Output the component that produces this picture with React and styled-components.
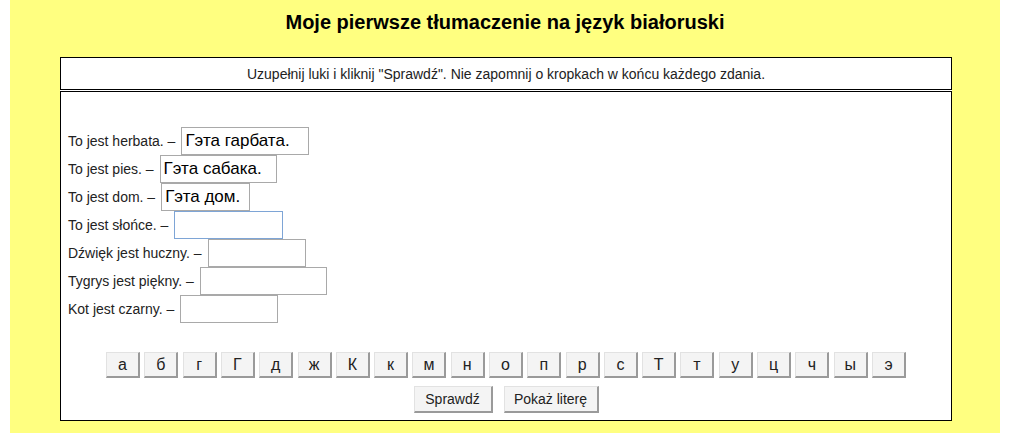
import React from "react";
import styled, { createGlobalStyle } from "styled-components";

const Global = createGlobalStyle`
  html, body { margin: 0; padding: 0; background: #ffffff; }
  body { font-family: Arial, "Liberation Sans", sans-serif; }
`;

const Page = styled.div`
  width: 990px;
  margin-left: 10px;
  min-height: 433px;
  background: #ffff80;
  padding-top: 11px;
  box-sizing: border-box;
`;

const Title = styled.h1`
  margin: 0;
  text-align: center;
  font-size: 20px;
  font-weight: bold;
  color: #000;
  line-height: 22px;
`;

const Frame = styled.div`
  width: 892px;
  margin: 24px 0 0 50px;
  background: #fff;
  display: flex;
  flex-direction: column;
  gap: 1px;
`;

const Instruction = styled.div`
  border: 1px solid #000;
  height: 31px;
  display: flex;
  align-items: center;
  justify-content: center;
  font-size: 14px;
  color: #222;
`;

const Content = styled.div`
  border: 1px solid #000;
  padding: 35px 7px 0;
  box-sizing: border-box;
  height: 330px;
  display: flex;
  flex-direction: column;
`;

const Rows = styled.div`
  display: flex;
  flex-direction: column;
`;

const Row = styled.div`
  display: flex;
  align-items: center;
  height: 28px;
  gap: 6px;
  font-size: 14px;
  color: #222;
`;

const Field = styled.input`
  box-sizing: border-box;
  width: ${(p) => p.$w}px;
  height: 28px;
  padding: 2px 3px;
  border: 1px solid ${(p) => (p.$focus ? "#7ea5d6" : "#a9a9a9")};
  font-family: Arial, "Liberation Sans", sans-serif;
  font-size: 17px;
  color: #000;
  background: #fff;
  outline: none;
`;

const Letters = styled.div`
  display: flex;
  justify-content: center;
  gap: 4.3px;
  margin-top: 29px;
`;

const Btn = styled.button`
  box-sizing: border-box;
  height: 26px;
  padding: 0;
  font-family: Arial, "Liberation Sans", sans-serif;
  color: #222;
  background: #f4f4f4;
  border-style: solid;
  border-width: 1px 2px 2px 1px;
  border-color: #e2e2e2 #9a9a9a #9a9a9a #e2e2e2;
  cursor: pointer;
`;

const LetterBtn = styled(Btn)`
  width: 34px;
  font-size: 16px;
`;

const ActionBtn = styled(Btn)`
  width: ${(p) => p.$w}px;
  height: 27px;
  font-size: 14px;
`;

const Actions = styled.div`
  display: flex;
  justify-content: center;
  gap: 11px;
  margin-top: 8px;
`;

const rows = [
  { label: "To jest herbata. –", value: "Гэта гарбата.", w: 128 },
  { label: "To jest pies. –", value: "Гэта сабака.", w: 117 },
  { label: "To jest dom. –", value: "Гэта дом.", w: 89 },
  { label: "To jest słońce. –", value: "", w: 109, focus: true },
  { label: "Dźwięk jest huczny. –", value: "", w: 98 },
  { label: "Tygrys jest piękny. –", value: "", w: 127 },
  { label: "Kot jest czarny. –", value: "", w: 98 },
];

const letters = ["а", "б", "г", "Г", "д", "ж", "К", "к", "м", "н", "о", "п", "р", "с", "Т", "т", "у", "ц", "ч", "ы", "э"];

export default function App() {
  return (
    <>
      <Global />
      <Page>
        <Title>Moje pierwsze tłumaczenie na język białoruski</Title>
        <Frame>
          <Instruction>
            Uzupełnij luki i kliknij "Sprawdź". Nie zapomnij o kropkach w końcu każdego zdania.
          </Instruction>
          <Content>
            <Rows>
              {rows.map((r) => (
                <Row key={r.label}>
                  <span>{r.label}</span>
                  <Field $w={r.w} $focus={r.focus} defaultValue={r.value} />
                </Row>
              ))}
            </Rows>
            <Letters>
              {letters.map((l) => (
                <LetterBtn key={l}>{l}</LetterBtn>
              ))}
            </Letters>
            <Actions>
              <ActionBtn $w={79}>Sprawdź</ActionBtn>
              <ActionBtn $w={95}>Pokaż literę</ActionBtn>
            </Actions>
          </Content>
        </Frame>
      </Page>
    </>
  );
}
